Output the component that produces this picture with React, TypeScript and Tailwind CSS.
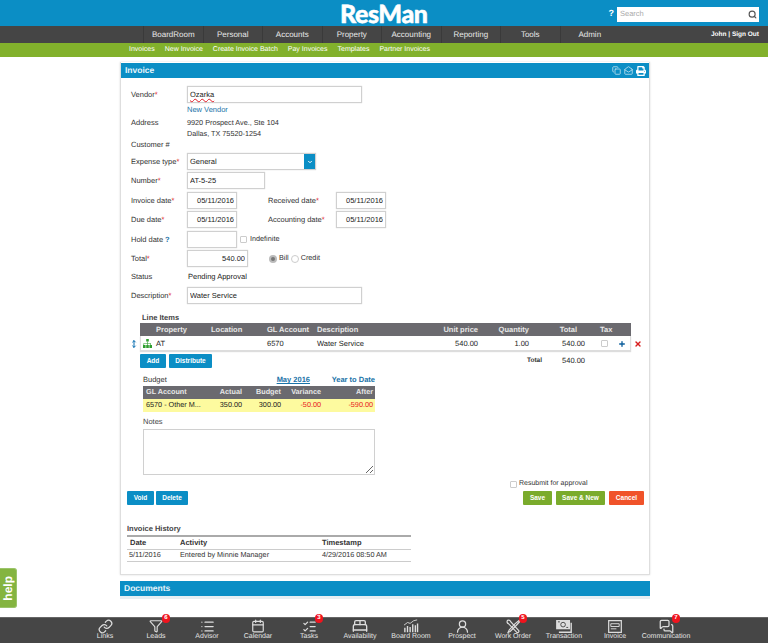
import { ReactNode } from 'react';
import {
  BedDouble,
  Calendar,
  ChevronDown,
  Copy,
  Funnel,
  Link,
  List,
  ListChecks,
  MailOpen,
  MessagesSquare,
  MoveVertical,
  Plus,
  Search,
  UserRound,
  X,
} from 'lucide-react';
import { FaPrint } from 'react-icons/fa';

const navItems = ['BoardRoom', 'Personal', 'Accounts', 'Property', 'Accounting', 'Reporting', 'Tools', 'Admin'];
const subItems = ['Invoices', 'New Invoice', 'Create Invoice Batch', 'Pay Invoices', 'Templates', 'Partner Invoices'];

function Req() {
  return <span className="text-[#e01b24]">*</span>;
}

function Label({ children, req }: { children: ReactNode; req?: boolean }) {
  return (
    <div className="w-[56px] shrink-0 whitespace-nowrap text-[7.5px] text-[#333]">
      {children}
      {req && <Req />}
    </div>
  );
}

function Field({ value, className }: { value: string; className: string }) {
  return (
    <input
      readOnly
      value={value}
      className={`h-[17px] border border-[#d0d0d0] bg-white px-[2px] text-[7.5px] text-[#222] outline-none shadow-[0_0_1px_#ccc] ${className}`}
    />
  );
}

function BlueButton({ children, className }: { children: ReactNode; className: string }) {
  return (
    <button className={`h-[14px] rounded-[1px] bg-[#0b8ec5] text-[6.5px] font-bold text-white ${className}`}>
      {children}
    </button>
  );
}

function BoardRoomIcon() {
  return (
    <svg width="16" height="14" viewBox="0 0 18 16" fill="none" stroke="#ddd" strokeWidth="1">
      <path d="M2 15V10M5 15V8M8 15V9M11 15V6M14 15V7M16.5 15V5" strokeWidth="1.6" />
      <path d="M1 7L5 4L8 5L12 2L16 1" />
    </svg>
  );
}

function WorkOrderIcon() {
  return (
    <svg width="15" height="15" viewBox="0 0 18 18" fill="none" stroke="#ddd" strokeWidth="1.4">
      <path d="M2 1.5C.7 3 1.2 5 3 5.6L13 16c1 1 3.2-.6 2.3-2L5.6 3.2C5 1.5 3.5 1 2 1.5Z" />
      <path d="M16 1.5L11 5.5L4 13l-1.5 3L5 15l7.5-7.5L16.5 3Z" />
    </svg>
  );
}

function TransactionIcon() {
  return (
    <svg width="16" height="13" viewBox="0 0 17 14">
      <path d="M0 0h15v10H0Z" fill="#ddd" />
      <circle cx="7.5" cy="5" r="2.5" fill="none" stroke="#464646" />
      <path d="M2 2h2M11 8h2" stroke="#464646" />
      <path d="M15.500 3H17v11H3v-1.500h12.500Z" fill="#ddd" />
    </svg>
  );
}

function InvoiceIcon() {
  return (
    <svg width="14" height="13" viewBox="0 0 15 14" fill="none" stroke="#ddd">
      <path d="M.7.7h13.6v12.600H.7Z" strokeWidth="1.3" />
      <path d="M3 4h9v3H3ZM3 9.5h6" />
    </svg>
  );
}

function SitemapIcon() {
  return (
    <svg width="9" height="9" viewBox="0 0 9 9" fill="#2f9e2f">
      <path d="M3.2 0h2.600v2.600H3.2ZM0 6h2.600v3H0ZM3.2 6h2.600v3H3.2ZM6.4 6H9v3H6.4Z" />
      <path d="M4.2 2.600h.6V4.200h3.200V6h-.6V4.800H4.800V6h-.6V4.800H1.100V6H.5V4.200h3.700Z" />
    </svg>
  );
}

function DockItem({ label, badge, children }: { label: string; badge?: string; children: ReactNode }) {
  return (
    <div className="flex w-[51px] flex-col items-center">
      <div className="relative flex h-[14px] w-[20px] shrink-0 items-center justify-center text-[#ddd]">
        {children}
        {badge && (
          <span className="absolute right-[-4px] top-[-5px] flex h-[9px] w-[8px] items-center justify-center rounded-full bg-[#f0141e] text-[6px] font-bold text-white">
            {badge}
          </span>
        )}
      </div>
      <div className="h-[8px] shrink-0 whitespace-nowrap text-[7px] leading-[8px] text-[#e4e4e4]">{label}</div>
    </div>
  );
}

export default function App() {
  return (
    <div className="relative flex h-[643px] flex-col overflow-hidden bg-white font-['Liberation_Sans',Arial,sans-serif] [text-rendering:geometricPrecision]">
      {/* Top header */}
      <header className="relative flex h-[26px] shrink-0 items-center justify-end bg-[#0b8ec5] pr-[9px] pt-[2px]">
        <div className="absolute left-[340px] top-[2px] font-['Lato',sans-serif] text-[25px] font-black leading-[24px] tracking-[-0.4px] text-white [-webkit-text-stroke:0.5px_white]">
          ResMan
        </div>
        <span className="mr-[3px] text-[9px] font-bold text-white">?</span>
        <div className="flex h-[15px] w-[142px] items-center justify-between bg-white pl-[3px] pr-[2px]">
          <span className="text-[7.5px] text-[#aaa]">Search</span>
          <Search size={9} strokeWidth={3} className="text-[#555]" />
        </div>
      </header>

      {/* Main nav */}
      <nav className="flex h-[17px] shrink-0 items-center bg-[#454545] pl-[143px] pr-[9px] text-[#e8e8e8]">
        {navItems.map((item) => (
          <div
            key={item}
            className="flex h-full w-[59.5px] items-center justify-center border-l border-[#3a3a3a] text-[8px] last:border-r"
          >
            {item}
          </div>
        ))}
        <div className="ml-auto text-[6.5px] font-bold text-white">John | Sign Out</div>
      </nav>

      {/* Sub nav */}
      <div className="flex h-[14px] shrink-0 items-center gap-[10px] bg-[#82b12c] pl-[129px] text-[7px] text-white">
        {subItems.map((item) => (
          <span key={item}>{item}</span>
        ))}
      </div>

      {/* Invoice panel */}
      <section className="ml-[120px] mt-[5px] h-[513px] w-[530px] shrink-0 border border-t-0 border-[#dedede] shadow-[0_0_2px_#ddd]">
        <div className="mt-[1px] flex h-[15px] items-center justify-between bg-[#0b8ec5] pl-[4px] pr-[3px]">
          <span className="text-[8.5px] font-bold text-[#e6f4fa]">Invoice</span>
          <div className="flex items-center gap-[3px] text-[#cfe8f3]">
            <Copy size={9} />
            <MailOpen size={9} />
            <FaPrint size={10} className="text-white" />
          </div>
        </div>

        <div className="pl-[10px]">
          <div className="mt-[8px] flex items-center">
            <Label req>Vendor</Label>
            <div className="flex h-[17px] w-[175px] items-center border border-[#d0d0d0] px-[2px] text-[7.5px] text-[#222] shadow-[0_0_1px_#ccc]">
              <span className="underline decoration-[#e01b24] decoration-wavy decoration-[0.5px]">Ozarka</span>
            </div>
          </div>
          <div className="flex h-[14px] items-center pl-[56px] text-[7.5px] text-[#1a73a8]">New Vendor</div>
          <div className="flex">
            <Label>Address</Label>
            <div className="text-[7.25px] leading-[11px] text-[#333]">
              9920 Prospect Ave., Ste 104
              <br />
              Dallas, TX 75520-1254
            </div>
          </div>
          <div className="flex h-[12px] items-center">
            <Label>Customer #</Label>
          </div>
          <div className="mt-[2px] flex items-center">
            <Label req>Expense type</Label>
            <div className="flex h-[17px] w-[129px] items-center justify-between border border-[#d0d0d0] pl-[2px] text-[7.5px] text-[#222] shadow-[0_0_1px_#ccc]">
              General
              <div className="flex h-full w-[11px] items-center justify-center bg-[#0b8ec5]">
                <ChevronDown size={6} strokeWidth={4} className="text-white" />
              </div>
            </div>
          </div>
          <div className="mt-[2px] flex items-center">
            <Label req>Number</Label>
            <Field value="AT-5-25" className="w-[78px]" />
          </div>
          <div className="mt-[3px] flex items-center">
            <Label req>Invoice date</Label>
            <Field value="05/11/2016" className="w-[50px] text-right" />
            <div className="ml-[31px] w-[68px] whitespace-nowrap text-[7.5px] text-[#333]">
              Received date
              <Req />
            </div>
            <Field value="05/11/2016" className="w-[50px] text-right" />
          </div>
          <div className="mt-[2px] flex items-center">
            <Label req>Due date</Label>
            <Field value="05/11/2016" className="w-[50px] text-right" />
            <div className="ml-[31px] w-[68px] whitespace-nowrap text-[7.5px] text-[#333]">
              Accounting date
              <Req />
            </div>
            <Field value="05/11/2016" className="w-[50px] text-right" />
          </div>
          <div className="mt-[3px] flex items-center">
            <Label>
              Hold date<span className="ml-[2px] font-bold text-[#1a73a8]">?</span>
            </Label>
            <Field value="" className="w-[50px]" />
            <span className="ml-[3px] h-[7px] w-[7px] rounded-[1px] border border-[#ccc]" />
            <span className="ml-[3px] text-[7.25px] text-[#333]">Indefinite</span>
          </div>
          <div className="mt-[2px] flex items-center">
            <Label req>Total</Label>
            <Field value="540.00" className="w-[61px] text-right" />
            <span className="ml-[21px] h-[8px] w-[8px] rounded-full border-2 border-[#bbb] bg-[#777]" />
            <span className="ml-[2px] text-[7.25px] text-[#333]">Bill</span>
            <span className="ml-[2px] h-[8px] w-[8px] rounded-full border border-[#ccc]" />
            <span className="ml-[2px] text-[7.25px] text-[#333]">Credit</span>
          </div>
          <div className="flex h-[20px] items-center">
            <Label>Status</Label>
            <span className="pl-[1px] text-[7.5px] text-[#222]">Pending Approval</span>
          </div>
          <div className="flex items-center">
            <Label req>Description</Label>
            <Field value="Water Service" className="w-[175px]" />
          </div>

          {/* Line items */}
          <div className="ml-[11px] mt-[8px] h-[11px] text-[7.5px] font-bold leading-[11px] text-[#444]">Line Items</div>
          <div className="relative ml-[9px] w-[491px] text-[7.5px]">
            <div className="grid h-[13px] grid-cols-[71px_56px_50px_113px_48px_51px_48px_54px] items-center bg-[#6b6a6f] font-bold text-[#e8e8e8]">
              <span className="pl-[16px]">Property</span>
              <span>Location</span>
              <span>GL Account</span>
              <span>Description</span>
              <span className="text-right">Unit price</span>
              <span className="text-right">Quantity</span>
              <span className="text-right">Total</span>
              <span className="pl-[23px]">Tax</span>
            </div>
            <div className="grid h-[15px] grid-cols-[70px_56px_50px_113px_48px_51px_56px_46px] items-center border-x border-b border-[#ddd] pt-[1px] text-[#222] shadow-[0_1px_1px_#ddd]">
              <span className="flex items-center gap-[2px] pl-[2px]">
                <SitemapIcon />
                <span className="pl-[2px]">AT</span>
              </span>
              <span />
              <span>6570</span>
              <span>Water Service</span>
              <span className="text-right">540.00</span>
              <span className="text-right">1.00</span>
              <span className="text-right">540.00</span>
              <span className="flex items-center gap-[10px] pl-[16px]">
                <span className="h-[7px] w-[7px] rounded-[1px] border border-[#ccc]" />
                <Plus size={8} strokeWidth={4} className="text-[#0b5e9c]" />
              </span>
            </div>
            <MoveVertical size={8} strokeWidth={3} className="absolute left-[-10px] top-[17px] text-[#0b6fb0]" />
            <X size={8} strokeWidth={4} className="absolute left-[494px] top-[17px] text-[#d81e1e]" />
          </div>
          <div className="ml-[9px] mt-[3px] flex h-[14px] items-center">
            <BlueButton className="w-[26px]">Add</BlueButton>
            <BlueButton className="ml-[3px] w-[43px]">Distribute</BlueButton>
            <span className="ml-[315px] w-[34px] text-[6.5px] font-bold text-[#333]">Total</span>
            <span className="w-[24px] text-right text-[7.5px] text-[#222]">540.00</span>
          </div>

          {/* Budget */}
          <div className="ml-[12px] mt-[6px] w-[232px]">
            <div className="flex h-[12px] items-center whitespace-nowrap text-[7.5px]">
              <span className="w-[136px] text-[#333]">Budget</span>
              <span className="w-[56px] font-bold text-[#1a73a8] underline">May 2016</span>
              <span className="font-bold text-[#1a73a8]">Year to Date</span>
            </div>
            <div className="grid h-[13px] grid-cols-[68px_31px_39px_40px_52px] items-center bg-[#6b6a6f] pr-[2px] text-[7.25px] font-bold text-[#e8e8e8]">
              <span className="pl-[3px]">GL Account</span>
              <span className="text-right">Actual</span>
              <span className="text-right">Budget</span>
              <span className="text-right">Variance</span>
              <span className="text-right">After</span>
            </div>
            <div className="grid h-[13px] grid-cols-[68px_31px_39px_40px_52px] items-center bg-[#fdfa9f] pr-[2px] text-[7.25px] text-[#222]">
              <span className="pl-[3px]">6570 - Other M...</span>
              <span className="text-right">350.00</span>
              <span className="text-right">300.00</span>
              <span className="text-right text-[#e8201c]">-50.00</span>
              <span className="text-right text-[#e8201c]">-590.00</span>
            </div>
            <div className="mt-[4px] h-[12px] text-[7.5px] leading-[12px] text-[#444]">Notes</div>
            <textarea readOnly className="mt-[1px] block h-[46px] w-[232px] border border-[#d0d0d0] outline-none" />
          </div>

          <div className="mt-[4px] flex h-[10px] items-center pl-[379px]">
            <span className="h-[7px] w-[7px] rounded-[1px] border border-[#ccc]" />
            <span className="ml-[2px] text-[7px] text-[#333]">Resubmit for approval</span>
          </div>
          <div className="mt-[2px] flex h-[14px] items-center">
            <div className="-ml-[4px] flex gap-[1px]">
              <BlueButton className="w-[27px]">Void</BlueButton>
              <BlueButton className="ml-[1px] w-[32px]">Delete</BlueButton>
            </div>
            <div className="ml-[335px] flex gap-[4px] text-[6.5px] font-bold text-white">
              <button className="h-[14px] w-[29px] rounded-[1px] bg-[#7aab2c]">Save</button>
              <button className="h-[14px] w-[49px] rounded-[1px] bg-[#7aab2c]">Save &amp; New</button>
              <button className="h-[14px] w-[35px] rounded-[1px] bg-[#f0532a]">Cancel</button>
            </div>
          </div>

          {/* History */}
          <div className="-ml-[4px] mt-[18px] w-[284px] text-[7.5px] text-[#333]">
            <div className="h-[12px] font-bold leading-[12px] text-[#444]">Invoice History</div>
            <div className="grid h-[14px] grid-cols-[53px_142px_89px] items-center border-t-2 border-[#aaa] font-bold">
              <span className="pl-[3px]">Date</span>
              <span>Activity</span>
              <span>Timestamp</span>
            </div>
            <div className="grid h-[13px] grid-cols-[53px_142px_89px] items-center border-y border-[#ccc] text-[7.25px]">
              <span className="pl-[2px]">5/11/2016</span>
              <span>Entered by Minnie Manager</span>
              <span>4/29/2016 08:50 AM</span>
            </div>
          </div>
        </div>
      </section>

      {/* Documents panel */}
      <section className="ml-[120px] mt-[6px] h-[18px] w-[530px] shrink-0 border-b-[3px] border-[#e6eef2]">
        <div className="flex h-[15px] items-center bg-[#0b8ec5] pl-[4px] text-[8.5px] font-bold text-[#e6f4fa]">
          Documents
        </div>
      </section>

      {/* Help tab */}
      <div className="absolute left-0 top-[568px] flex h-[40px] w-[17px] items-center justify-center rounded-r-[3px] border border-l-0 border-[#9bc46a] bg-[#84b440]">
        <span className="rotate-180 text-[12px] font-bold text-white [writing-mode:vertical-rl]">help</span>
      </div>

      {/* Bottom dock */}
      <footer className="mt-auto flex h-[26px] shrink-0 justify-center border-t border-[#666] bg-[#464646] pl-[3px] pt-[1px]">
        <DockItem label="Links">
          <Link size={15} />
        </DockItem>
        <DockItem label="Leads" badge="6">
          <Funnel size={14} />
        </DockItem>
        <DockItem label="Advisor">
          <List size={15} />
        </DockItem>
        <DockItem label="Calendar">
          <Calendar size={14} />
        </DockItem>
        <DockItem label="Tasks" badge="3">
          <ListChecks size={15} />
        </DockItem>
        <DockItem label="Availability">
          <BedDouble size={16} />
        </DockItem>
        <DockItem label="Board Room">
          <BoardRoomIcon />
        </DockItem>
        <DockItem label="Prospect">
          <UserRound size={15} />
        </DockItem>
        <DockItem label="Work Order" badge="5">
          <WorkOrderIcon />
        </DockItem>
        <DockItem label="Transaction">
          <TransactionIcon />
        </DockItem>
        <DockItem label="Invoice">
          <InvoiceIcon />
        </DockItem>
        <DockItem label="Communication" badge="7">
          <MessagesSquare size={15} />
        </DockItem>
      </footer>
    </div>
  );
}
